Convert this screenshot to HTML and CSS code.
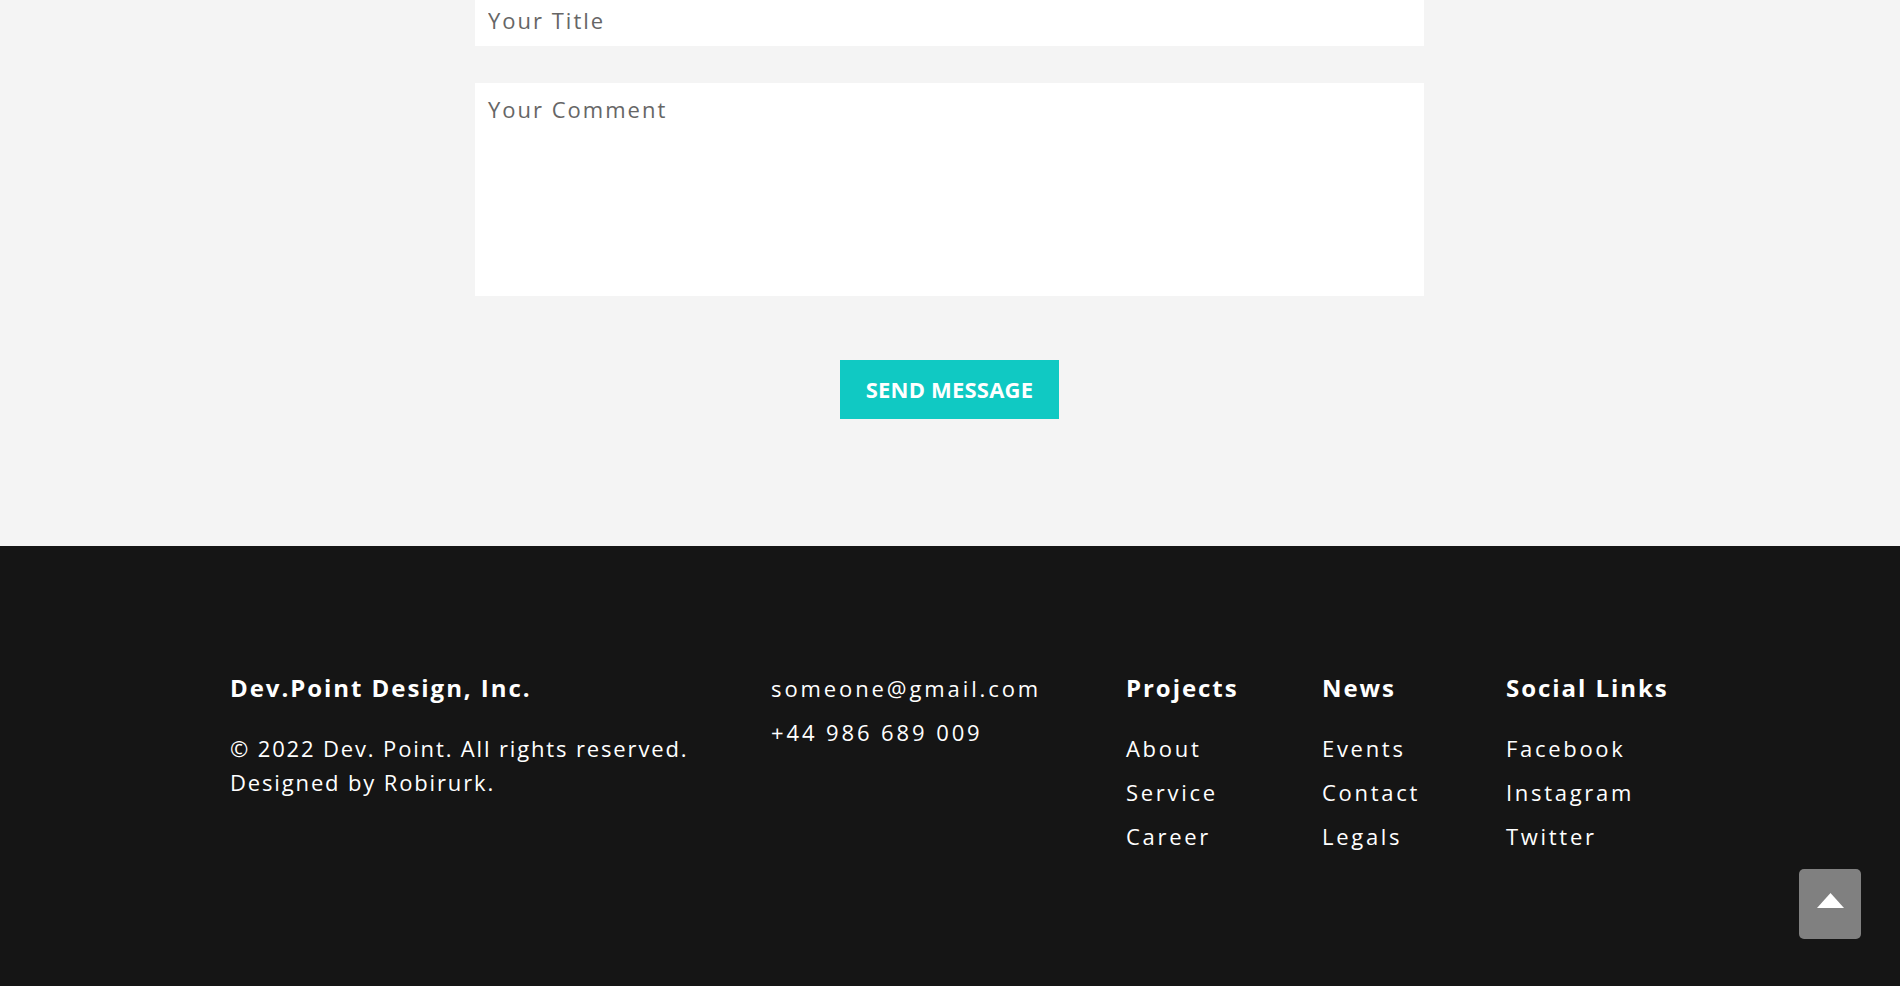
FILE: index.html
```html
<!DOCTYPE html>
<html lang="en">
<head>
<meta charset="utf-8">
<title>Dev.Point Design — Contact</title>
<link rel="stylesheet" href="styles.css">
</head>
<body>
<section class="contact">
  <form class="contact-form">
    <input class="field field-title" type="text" placeholder="Your Title">
    <textarea class="field field-comment" placeholder="Your Comment"></textarea>
    <button class="send-btn" type="button">SEND MESSAGE</button>
  </form>
</section>

<footer class="footer">
  <div class="footer-grid">
    <div class="footer-col">
      <h3 class="footer-heading">Dev.Point Design, Inc.</h3>
      <p class="copyright">© 2022 Dev. Point. All rights reserved.<br>Designed by Robirurk.</p>
    </div>
    <div class="footer-col contact-info">
      <a class="contact-line" href="#">someone@gmail.com</a>
      <a class="contact-line" href="#">+44 986 689 009</a>
    </div>
    <div class="footer-col">
      <h3 class="footer-heading">Projects</h3>
      <ul class="footer-links">
        <li><a href="#">About</a></li>
        <li><a href="#">Service</a></li>
        <li><a href="#">Career</a></li>
      </ul>
    </div>
    <div class="footer-col">
      <h3 class="footer-heading">News</h3>
      <ul class="footer-links">
        <li><a href="#">Events</a></li>
        <li><a href="#">Contact</a></li>
        <li><a href="#">Legals</a></li>
      </ul>
    </div>
    <div class="footer-col">
      <h3 class="footer-heading">Social Links</h3>
      <ul class="footer-links">
        <li><a href="#">Facebook</a></li>
        <li><a href="#">Instagram</a></li>
        <li><a href="#">Twitter</a></li>
      </ul>
    </div>
  </div>
</footer>

<a class="scroll-top" href="#" aria-label="Back to top">
  <svg width="27" height="15" viewBox="0 0 27 15"><polygon points="13.5,0 27,15 0,15" fill="#ffffff"/></svg>
</a>
</body>
</html>
```

FILE: styles.css
```css
* { box-sizing: border-box; }

html, body {
  margin: 0;
  padding: 0;
  background: #ffffff;
  font-family: "Open Sans", "Liberation Sans", sans-serif;
}

.contact {
  background: #f4f4f4;
  padding: 0 0 127px;
}

.contact-form {
  width: 949px;
  margin-left: calc(50% - 475px);
  display: flex;
  flex-direction: column;
  align-items: center;
}

.field {
  width: 100%;
  display: block;
  border: 0;
  outline: none;
  background: #ffffff;
  margin: 0;
  font-family: "Open Sans", "Liberation Sans", sans-serif;
  font-size: 22px;
  letter-spacing: 2px;
  color: #333333;
  padding: 0 13px;
}

.field::placeholder {
  color: #666666;
  opacity: 1;
}

.field-title {
  height: 46px;
  padding-bottom: 6px;
}

.field-comment {
  margin-top: 37px;
  height: 213px;
  padding-top: 11px;
  line-height: normal;
  resize: none;
}

.send-btn {
  margin-top: 64px;
  width: 219px;
  height: 59px;
  border: 0;
  background: #10c9c3;
  color: #ffffff;
  font-family: "Open Sans", "Liberation Sans", sans-serif;
  font-weight: 700;
  font-size: 22px;
  letter-spacing: 0.2px;
  padding: 0 0 2px;
  cursor: pointer;
}

.footer {
  background: #151515;
  color: #ffffff;
  padding: 120px 0 128px;
}

.footer-grid {
  width: 1440px;
  margin: 0 auto;
  display: grid;
  grid-template-columns: 541px 355px 196px 184px 1fr;
}

.footer-col {
  display: flex;
  flex-direction: column;
}

.footer-heading {
  margin: 0;
  font-size: 24px;
  font-weight: 700;
  line-height: 44px;
  letter-spacing: 1.95px;
  white-space: nowrap;
}

.copyright {
  margin: 22px 0 0;
  font-size: 22px;
  line-height: 33.5px;
  letter-spacing: 1.85px;
  white-space: nowrap;
}

.contact-line {
  color: #ffffff;
  text-decoration: none;
  font-size: 22px;
  line-height: 44px;
  letter-spacing: 2.9px;
}

.footer-links {
  list-style: none;
  margin: 16px 0 0;
  padding: 0;
}

.footer-links li {
  font-size: 22px;
  line-height: 44px;
}

.footer-links a {
  color: #ffffff;
  text-decoration: none;
  letter-spacing: 2.7px;
}

.scroll-top {
  position: fixed;
  right: 39px;
  bottom: 50px;
  width: 62px;
  height: 70px;
  border-radius: 5px;
  background: #808080;
  display: flex;
  align-items: center;
  justify-content: center;
  padding-bottom: 8px;
}

.scroll-top svg { display: block; }
```
